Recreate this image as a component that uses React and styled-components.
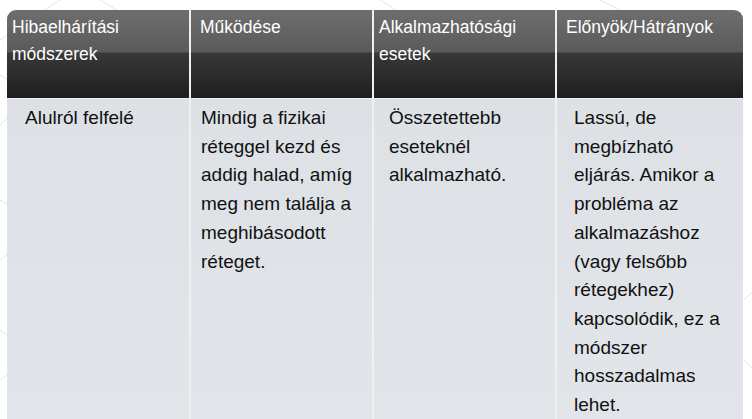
import React from "react";
import styled, { createGlobalStyle } from "styled-components";

const GlobalStyle = createGlobalStyle`
  html, body {
    margin: 0;
    padding: 0;
    background: #ffffff;
    overflow: hidden;
  }
  body {
    font-family: "Liberation Sans", Arial, sans-serif;
  }
`;

const columns = [
  {
    title: "Hibaelhárítási módszerek",
    text: "Alulról felfelé",
    headPad: 5,
    bodyPad: 18,
  },
  {
    title: "Működése",
    text: "Mindig a fizikai réteggel kezd és addig halad, amíg meg nem találja a meghibásodott réteget.",
    headPad: 9,
    bodyPad: 10,
  },
  {
    title: "Alkalmazhatósági esetek",
    text: "Összetettebb eseteknél alkalmazható.",
    headPad: 5,
    bodyPad: 15,
  },
  {
    title: "Előnyök/Hátrányok",
    text: "Lassú, de megbízható eljárás. Amikor a probléma az alkalmazáshoz (vagy felsőbb rétegekhez) kapcsolódik, ez a módszer hosszadalmas lehet.",
    headPad: 9,
    bodyPad: 17,
  },
];

const Page = styled.div`
  position: relative;
  width: 752px;
  height: 419px;
  padding: 10px 0 0 7px;
  box-sizing: border-box;
  overflow: hidden;
`;

const Backdrop = styled.svg`
  position: absolute;
  inset: 0;
  pointer-events: none;
`;

const Table = styled.div`
  position: relative;
  display: grid;
  grid-template-columns: 182px 181px 181px 186px;
  grid-template-rows: 88px 340px;
  column-gap: 2px;
  row-gap: 1px;
  width: 736px;
  background: #eef0f2;
  border-radius: 9px 9px 0 0;
  overflow: hidden;
`;

const HeadCell = styled.div`
  padding: 4px 6px 0 ${(p) => p.$pad}px;
  background: linear-gradient(
    to bottom,
    #6e6e6e 0px,
    #5a5a5a 42px,
    #383838 43px,
    #1e1e1e 88px
  );
  color: #ffffff;
  font-size: 17.5px;
  line-height: 26.5px;
`;

const BodyCell = styled.div`
  padding: 5px 10px 0 ${(p) => p.$pad}px;
  background: linear-gradient(to bottom, #dde1e6, #e2e5ea);
  color: #111111;
  font-size: 19px;
  line-height: 28.7px;
`;

export default function App() {
  return (
    <>
      <GlobalStyle />
      <Page>
        <Backdrop width="752" height="419" viewBox="0 0 752 419">
          <g stroke="#e4e4e4" strokeWidth="1" fill="none">
            <path d="M0 40 L60 0" />
            <path d="M100 0 L150 30" />
            <path d="M380 0 L420 25" />
            <path d="M600 0 L660 30" />
            <path d="M0 75 L8 80" />
            <path d="M0 125 L8 118" />
            <path d="M0 200 L8 205" />
            <path d="M0 260 L8 254" />
            <path d="M0 330 L8 336" />
            <path d="M0 380 L8 374" />
            <path d="M744 300 L752 292" />
            <path d="M744 360 L752 368" />
          </g>
        </Backdrop>
        <Table>
          {columns.map((c) => (
            <HeadCell key={c.title} $pad={c.headPad}>
              {c.title}
            </HeadCell>
          ))}
          {columns.map((c) => (
            <BodyCell key={c.title + "-body"} $pad={c.bodyPad}>
              {c.text}
            </BodyCell>
          ))}
        </Table>
      </Page>
    </>
  );
}
